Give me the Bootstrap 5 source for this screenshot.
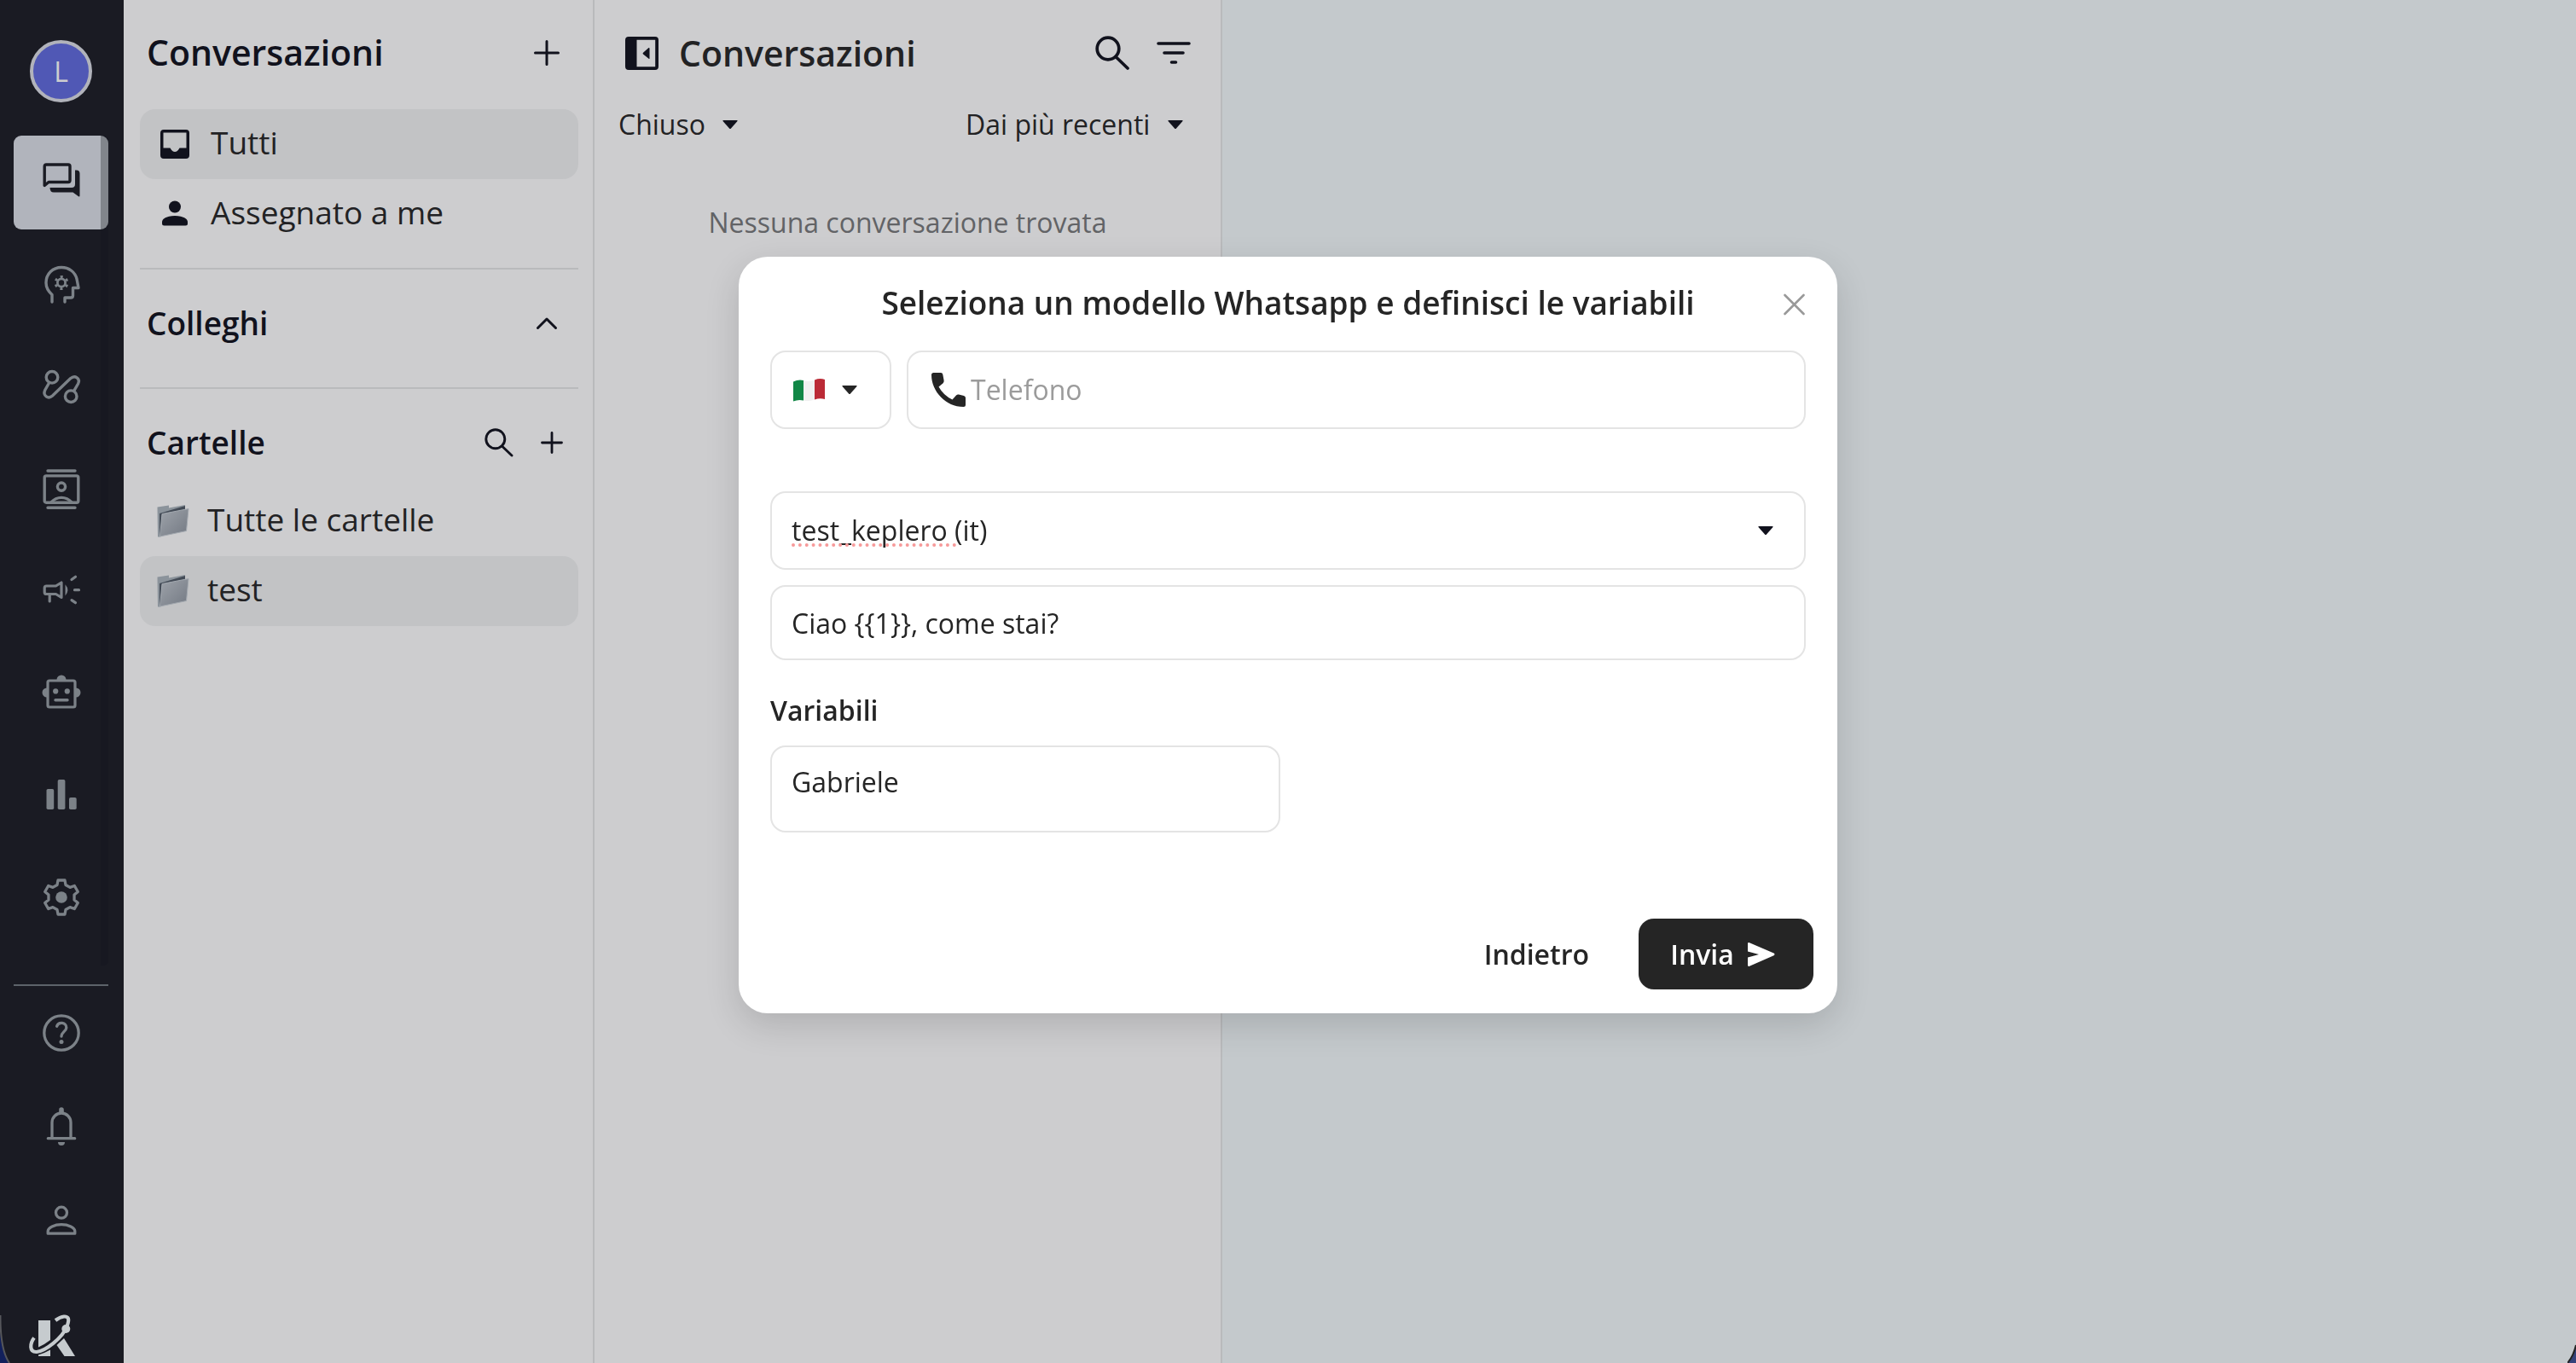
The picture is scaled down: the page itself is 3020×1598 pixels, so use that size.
<!DOCTYPE html>
<html lang="it">
<head>
<meta charset="utf-8">
<meta name="viewport" content="width=device-width, initial-scale=1">
<title>Conversazioni</title>
<link href="https://cdn.jsdelivr.net/npm/bootstrap@5.3.0/dist/css/bootstrap.min.css" rel="stylesheet">
<style>
  :root { --ink: #11121d; --text: #222224; --line: #b9babc; --panel: #cdcdcf; --rail: #1a1b23; --field: #e4e4e4; }
  body { font-family: "Open Sans", sans-serif; font-size: 32px; line-height: 48px; color: var(--text); background: #c4c9cc; }
  svg { display: block; flex: none; }
  .app-shell { height: 100vh; overflow: hidden; }
  /* icon rail */
  .rail { width: 145px; background: var(--rail); padding: 47px 18px 0 16px; }
  .avatar { width: 73px; height: 73px; border: 4px solid #b1b3bb; background: #5058b5; color: #cdcdcf; font-size: 32px; }
  .rail-scroll { margin-top: 39px; height: 973px; background: linear-gradient(to left, #171821 9px, transparent 9px); border-radius: 5px; gap: 10px; }
  .rail-link { height: 110px; color: #7c8288; border-radius: 9px; }
  .rail-scroll .rail-link { flex: none; }
  .rail-link.active { background: linear-gradient(to left, #81858b 9px, #b1b4bc 9px); color: var(--rail); }
  .rail-rule { margin-top: 22px; border-top: 2px solid #5d636a; }
  .rail-logo { margin: 54px 0 0 16px; }
  /* panels */
  .folders { width: 552px; background: var(--panel); border-right: 2px solid var(--line); padding: 0 17px 0 19px; }
  .threads { width: 736px; background: var(--panel); border-right: 2px solid var(--line); }
  .bar-top { height: 128px; padding-bottom: 4px; }
  h1, h2, h3 { margin: 0; color: var(--ink); font-weight: 600; }
  .title-lg { font-size: 41px; line-height: 56px; padding-bottom: 2px; }
  .title-md { font-size: 37px; line-height: 48px; }
  .threads h2 { color: var(--text); }
  .threads .bar-top { height: 122px; padding: 4px 35px 0 36px; }
  .threads .bar-top svg { margin-bottom: 2px; }
  .folders .head-row { padding: 0 22px 0 8px; color: var(--ink); }
  .folders .head-row.bar-top { padding-bottom: 4px; }
  .side-link { height: 82px; border-radius: 18px; font-size: 37px; color: var(--text); padding: 0 24px; gap: 25px; }
  .side-link.folder { padding: 0 20px; gap: 21px; }
  .side-link.active { background: #c2c3c5; }
  .side-link svg { color: var(--ink); }
  .side-link .side-text { padding-bottom: 4px; }
  .rule { border-top: 2px solid var(--line); }
  .rule-first { margin-top: 22px; }
  .folders .sec-colleagues { height: 138px; padding-bottom: 12px; }
  .folders .sec-folders { height: 114px; padding-top: 12px; padding-right: 18px; }
  .icon-btn { padding: 0; border: 0; background: none; color: inherit; }
  .pick { appearance: none; border: 0; color: var(--text); padding: 0 38px 0 0;
    background: url("data:image/svg+xml,%3Csvg xmlns='http://www.w3.org/2000/svg' width='18' height='10'%3E%3Cpath d='M1 0h16q1 0 .5 1L10 9.500q-1 1-2 0L.5 1Q0 0 1 0z' fill='%2311121d'/%3E%3C/svg%3E") no-repeat right center; }
  .filters { padding: 0 44px 0 28px; }
  .empty-note { margin-top: 67px; color: #626366; }
  /* template dialog */
  .dialog-wrap { display: block; padding-top: 301px; }
  .dialog-wrap .modal-dialog { max-width: 1288px; margin: 0 auto; }
  .dialog-wrap .modal-content { border: 0; border-radius: 34px; color: #252525; box-shadow: 0 14px 40px rgba(0, 0, 0, .14); }
  .dialog-head { height: 110px; padding: 0 39px 2px; }
  .dialog-head h3 { color: #252525; }
  .dialog-close { right: 38px; top: 43px; color: #999; }
  .dialog-body { padding: 0 37px; }
  .field { border: 2px solid var(--field); border-radius: 18px; background-color: #fff; color: #252525; padding: 0 23px; font-size: 32px; line-height: 48px; }
  .field-tall { height: 92px; }
  .field-msg { height: 88px; }
  .field-country { width: 142px; gap: 20px; padding-left: 25px; }
  .phone-box { gap: 6px; padding-left: 27px; }
  .phone-box input { border: 0; outline: 0; background: none; color: #252525; }
  .phone-box input::placeholder { color: #9b9b9b; opacity: 1; }
  .template-row { margin-top: 73px; margin-bottom: 18px; }
  select.field.pick { padding: 0 60px 0 23px; background-position: right 36px center; font-weight: 500; }
  .spell { left: 25px; top: 61px; width: 193px; border-bottom: 4px dotted #f79a9a; }
  .vars-label { margin: 35px 0 17px; font-weight: 600; }
  textarea.field { width: 598px; height: 102px; padding-top: 17px; resize: none; overflow: hidden; }
  .dialog-foot { padding: 101px 28px 28px; gap: 58px; font-weight: 600; }
  .btn-back { padding: 0; border: 0; background: none; font-weight: 600; color: #252525; }
  .btn-send { height: 83px; width: 205px; border: 0; border-radius: 18px; background: #252525; color: #fff; font-weight: 600; padding: 0 8px 0 0; gap: 16px; }
  .screen-corner { bottom: 0; z-index: 2000; }
</style>
<script src="https://cdn.jsdelivr.net/npm/bootstrap@5.3.0/dist/js/bootstrap.bundle.min.js"></script>
</head>
<body>
<div class="app-shell d-flex">

  <nav class="rail d-flex flex-column flex-shrink-0" aria-label="Principale">
    <a href="#" class="avatar rounded-circle d-flex align-items-center justify-content-center mx-auto text-decoration-none flex-shrink-0">L</a>
    <div class="rail-scroll d-flex flex-column flex-shrink-0">
      <a href="#" class="rail-link active d-flex align-items-center justify-content-center" aria-label="Conversazioni">
        <svg width="48" height="48" viewBox="0 0 48 48" fill="none" stroke="currentColor" stroke-width="3.4" stroke-linejoin="round"><path d="M4.200 27.500V5q0-2 2-2H32q2 0 2 2v16.500q0 2-2 2H9z"/><path d="M40 9.500h1.500q4 0 4 4V39.500q0 1.500-1.500.8L37.500 35.500H15q-4.500 0-4.500-5.500H36q4 0 4-4z" fill="currentColor" stroke="none"/></svg>
      </a>
      <a href="#" class="rail-link d-flex align-items-center justify-content-center" aria-label="Conoscenza">
        <svg width="48" height="48" viewBox="0 0 48 48" fill="none" stroke="currentColor" stroke-width="3.4" stroke-linecap="round" stroke-linejoin="round"><path d="M13 44V35.500C8.500 31.500 6 27 6 21.500C6 11 14 3.500 24 3.500C33 3.500 40 9 42 17L44 27.500H37.500V36.500q0 2.500-2.500 2.500H28V44"/><circle cx="24" cy="21.500" r="4.600" stroke-width="2.800"/><circle cx="24" cy="21.500" r="7" stroke-width="2.800" stroke-dasharray="3 4.330" stroke-linecap="butt" transform="rotate(17.700 24 21.500)"/></svg>
      </a>
      <a href="#" class="rail-link d-flex align-items-center justify-content-center" aria-label="Flussi">
        <svg width="48" height="48" viewBox="0 0 48 48" fill="none" stroke="currentColor" stroke-width="3.400"><circle cx="13" cy="12.300" r="6.800"/><circle cx="35.200" cy="34.700" r="6.800"/><path d="M9.800 18.500L4.700 27.500C2 34 8.500 38.500 13.500 34L34.500 13.800C40 9 46.500 14 43.500 20L38.500 28.600"/></svg>
      </a>
      <a href="#" class="rail-link d-flex align-items-center justify-content-center" aria-label="Contatti">
        <svg width="48" height="48" viewBox="0 0 48 48" fill="none" stroke="currentColor" stroke-width="3.400" stroke-linecap="round"><path d="M8 2h32M8 45.300h32"/><rect x="4.200" y="7.900" width="39.600" height="31.300" rx="2"/><circle cx="24" cy="20.600" r="4.600"/><path d="M12 39q5-5.600 12-5.600T36 39"/></svg>
      </a>
      <a href="#" class="rail-link d-flex align-items-center justify-content-center" aria-label="Campagne">
        <svg width="48" height="48" viewBox="0 0 48 48" fill="none" stroke="currentColor" stroke-width="3.200" stroke-linecap="round" stroke-linejoin="round"><path d="M17.500 17L24 13V30.500L17.500 26.500H6.500q-2.300 0-2.300-2.300v-4.900q0-2.300 2.300-2.300zM10.200 27v8M36 9.500l4.500-3.200M39.500 21.700H44.500M36 33.700l4.500 3"/><path d="M28.500 15.200q5.800 6.500 0 13.200z" fill="currentColor" stroke="none"/></svg>
      </a>
      <a href="#" class="rail-link d-flex align-items-center justify-content-center" aria-label="Assistenti">
        <svg width="50" height="48" viewBox="-1 0 50 48" fill="currentColor"><path d="M18.500 7a5.500 5.500 0 0 1 11 0zM7 16.500a5.500 5.500 0 0 0 0 11zM41 16.500a5.500 5.500 0 0 1 0 11z"/><rect x="8" y="8" width="32" height="31" rx="2" fill="none" stroke="currentColor" stroke-width="3.200"/><circle cx="17.200" cy="20.400" r="3.100"/><circle cx="30.800" cy="20.400" r="3.100"/><path d="M17 30.700h14" stroke="currentColor" stroke-width="3.400" stroke-linecap="round"/></svg>
      </a>
      <a href="#" class="rail-link d-flex align-items-center justify-content-center" aria-label="Statistiche">
        <svg width="48" height="48" viewBox="0 0 48 48" fill="currentColor"><rect x="6.500" y="15" width="8.700" height="24" rx="1.800"/><rect x="19.700" y="4" width="8.700" height="35" rx="1.800"/><rect x="33" y="25" width="8.700" height="14" rx="1.800"/></svg>
      </a>
      <a href="#" class="rail-link d-flex align-items-center justify-content-center" aria-label="Impostazioni">
        <svg width="48" height="48" viewBox="-24 -22 48 48" fill="none" stroke="currentColor" stroke-width="3.300" stroke-linejoin="round"><path d="M-4-20H4L5-14.500L10.060-11.580L15.320-13.460L19.320-6.540L15.060-2.920V2.920L19.320 6.540L15.320 13.460L10.060 11.580L5 14.500L4 20H-4L-5 14.500L-10.060 11.580L-15.320 13.460L-19.320 6.540L-15.060 2.920V-2.920L-19.320-6.540L-15.320-13.460L-10.060-11.580L-5-14.500z"/><circle r="6.800" fill="currentColor" stroke="none"/></svg>
      </a>
    </div>
    <div class="rail-rule"></div>
    <a href="#" class="rail-link d-flex align-items-center justify-content-center flex-shrink-0" aria-label="Aiuto">
      <svg width="48" height="48" viewBox="0 0 48 48" fill="none" stroke="currentColor" stroke-width="3.300" stroke-linecap="round"><circle cx="24" cy="24" r="20.200"/><path d="M18.600 16.200C20.500 10.500 30 11.200 29.800 18C29.600 22 24 23 24 28"/><circle cx="24" cy="34.500" r="2.500" fill="currentColor" stroke="none"/></svg>
    </a>
    <a href="#" class="rail-link d-flex align-items-center justify-content-center flex-shrink-0" aria-label="Notifiche">
      <svg width="48" height="48" viewBox="0 0 48 48" fill="none" stroke="currentColor" stroke-width="3.300" stroke-linecap="round"><path d="M13 37V19a11 11 0 0 1 22 0V37M8.300 37.700h31.400"/><path d="M21.200 7V4q0-2.700 2.800-2.700T26.800 4v3zM20 42h8q0 4-4 4t-4-4z" fill="currentColor" stroke="none"/></svg>
    </a>
    <a href="#" class="rail-link d-flex align-items-center justify-content-center flex-shrink-0" aria-label="Profilo">
      <svg width="48" height="48" viewBox="0 0 48 48" fill="none" stroke="currentColor" stroke-width="3.300" stroke-linejoin="round"><circle cx="24" cy="14.700" r="6.500"/><path d="M8.200 39.200v-2.700C8.200 32 16 28.700 24 28.700S39.800 32 39.800 36.500v2.700z"/></svg>
    </a>
    <svg class="rail-logo" width="60" height="54" viewBox="0 0 60 54"><path d="M13 8h14v23Q20 36.500 13 39.500zM13 48.500Q20 46.500 27 42.500V50H13zM34.500 37L43 29L56 50H43.500z" fill="#c6cbce"/><path d="M8 28.500C3 35 2 45.500 11 45C21 44 41 29 46.500 15C50 6 48 3.300 43 3.500C40 3.800 37 5 33 8" fill="none" stroke="#c6cbce" stroke-width="4.200"/><circle cx="45.300" cy="18" r="5" fill="#c6cbce"/></svg>
  </nav>

  <aside class="folders flex-shrink-0">
    <div class="head-row bar-top d-flex align-items-center justify-content-between">
      <h1 class="title-lg">Conversazioni</h1>
      <button type="button" class="icon-btn" aria-label="Nuova conversazione"><svg width="30" height="32" viewBox="0 0 30 32" stroke="currentColor" stroke-width="3" stroke-linecap="round"><path d="M15 2.500v27M1.500 16h27"/></svg></button>
    </div>
    <a href="#" class="side-link active d-flex align-items-center text-decoration-none">
      <svg width="34" height="34" viewBox="0 0 34 34" fill="currentColor"><path fill-rule="evenodd" d="M4 0h26q4 0 4 4v26q0 4-4 4H4q-4 0-4-4V4q0-4 4-4zM3.500 3.500V21.500H11.500Q14 26 17 26T22.500 21.500H30.500V3.500z"/></svg>
      <span class="side-text">Tutti</span>
    </a>
    <a href="#" class="side-link d-flex align-items-center text-decoration-none">
      <svg width="34" height="34" viewBox="0 0 34 34" fill="currentColor"><circle cx="17" cy="8.500" r="7"/><path d="M2 26.500C2 21.500 9.500 19 17 19S32 21.500 32 26.500V28q0 2.500-2.500 2.500h-25Q2 30.500 2 28z"/></svg>
      <span class="side-text">Assegnato a me</span>
    </a>
    <div class="rule rule-first"></div>
    <div class="head-row sec-colleagues d-flex align-items-center justify-content-between">
      <h2 class="title-md">Colleghi</h2>
      <button type="button" class="icon-btn" aria-label="Comprimi"><svg width="30" height="16" viewBox="0 0 30 16" fill="none" stroke="currentColor" stroke-width="3" stroke-linecap="round" stroke-linejoin="round"><path d="M4.500 13.500L15 3l10.500 10.500"/></svg></button>
    </div>
    <div class="rule"></div>
    <div class="head-row sec-folders d-flex align-items-center justify-content-between">
      <h2 class="title-md">Cartelle</h2>
      <div class="d-flex align-items-center gap-4">
        <button type="button" class="icon-btn me-2" aria-label="Cerca cartella"><svg width="34" height="34" viewBox="0 0 34 34" fill="none" stroke="currentColor" stroke-width="2.900" stroke-linecap="round"><circle cx="12.800" cy="12.800" r="11"/><path d="M20.500 21l11.500 11"/></svg></button>
        <button type="button" class="icon-btn" aria-label="Nuova cartella"><svg width="26" height="26" viewBox="0 0 26 26" stroke="currentColor" stroke-width="2.800" stroke-linecap="round"><path d="M13 1.500v23M1.500 13h23"/></svg></button>
      </div>
    </div>
    <a href="#" class="side-link folder d-flex align-items-center text-decoration-none">
      <svg width="38" height="38" viewBox="0 0 38 38"><defs><linearGradient id="fold" x1="0" y1="0" x2="1" y2="1"><stop offset="0" stop-color="#9ea3aa"/><stop offset="1" stop-color="#737983"/></linearGradient></defs><path d="M.5 2.500L14 .5V3.500L33 0v14L4 37.500H1z" fill="#8b939b"/><path d="M3 10L33 1v7L6 36l-3 1z" fill="#434b56"/><path d="M6 10.500L37 4.500L34.500 30.500L3.500 37z" fill="url(#fold)" stroke="#a3a9b0"/></svg>
      <span class="side-text">Tutte le cartelle</span>
    </a>
    <a href="#" class="side-link folder active d-flex align-items-center text-decoration-none">
      <svg width="38" height="38" viewBox="0 0 38 38"><path d="M.5 2.500L14 .5V3.500L33 0v14L4 37.500H1z" fill="#8b939b"/><path d="M3 10L33 1v7L6 36l-3 1z" fill="#434b56"/><path d="M6 10.500L37 4.500L34.500 30.500L3.500 37z" fill="url(#fold)" stroke="#a3a9b0"/></svg>
      <span class="side-text">test</span>
    </a>
  </aside>

  <section class="threads flex-shrink-0">
    <div class="bar-top d-flex align-items-center">
      <button type="button" class="icon-btn" aria-label="Chiudi pannello"><svg width="39" height="39" viewBox="0 0 39 39" fill="#11121d"><path fill-rule="evenodd" d="M4 0h31q4 0 4 4v31q0 4-4 4H4q-4 0-4-4V4q0-4 4-4zM13.500 3.800v31.500H35.200V3.800zM28.500 14v11.500q0 1-1 .3L21 20.500q-.8-.9 0-1.800L27.500 13q1-.5 1 1z"/></svg></button>
      <h2 class="title-lg flex-grow-1 ps-4">Conversazioni</h2>
      <button type="button" class="icon-btn" aria-label="Cerca"><svg width="40" height="40" viewBox="0 0 40 40" fill="none" stroke="#11121d" stroke-width="3.700" stroke-linecap="round"><circle cx="15" cy="15" r="12.800"/><path d="M24.500 25L38 38"/></svg></button>
      <button type="button" class="icon-btn ms-4 ps-2" aria-label="Filtra"><svg width="40" height="28" viewBox="0 0 40 28" stroke="#11121d" stroke-width="3.600" stroke-linecap="round"><path d="M2 3h36M9 14h22M17.500 25h5"/></svg></button>
    </div>
    <div class="filters d-flex justify-content-between">
      <select class="pick" aria-label="Stato"><option>Chiuso</option></select>
      <select class="pick" aria-label="Ordinamento"><option>Dai più recenti</option></select>
    </div>
    <p class="empty-note text-center mb-0">Nessuna conversazione trovata</p>
  </section>

  <main class="flex-grow-1"></main>
</div>

<div class="modal dialog-wrap" tabindex="-1" role="dialog" aria-labelledby="dlg-title">
  <div class="modal-dialog">
    <form class="modal-content">
      <div class="dialog-head position-relative d-flex align-items-center justify-content-center">
        <h3 class="title-md" id="dlg-title">Seleziona un modello Whatsapp e definisci le variabili</h3>
        <button type="button" class="icon-btn dialog-close position-absolute" aria-label="Chiudi"><svg width="25" height="26" viewBox="0 0 25 26" stroke="currentColor" stroke-width="2.600" stroke-linecap="round"><path d="M1.500 2l22 22M23.500 2l-22 22"/></svg></button>
      </div>
      <div class="dialog-body">
        <div class="d-flex" style="gap:18px">
          <button type="button" class="field field-tall field-country d-flex align-items-center" aria-label="Prefisso Italia">
            <svg width="37" height="27" viewBox="0 0 37 27"><path d="M0 3.500Q6 .5 12 2V25.500Q6 24 0 26.500z" fill="#118746"/><path d="M12 2Q18 4 25 1.500V24.500Q18 27 12 25.500z" fill="#f1f1f1"/><path d="M25 1.500Q31-1 37 1V24Q31 22.500 25 24.500z" fill="#bb2a36"/></svg>
            <svg width="18" height="10" viewBox="0 0 18 10"><path d="M1 0h16q1 0 .5 1L10 9.500q-1 1-2 0L.5 1Q0 0 1 0z" fill="#252525"/></svg>
          </button>
          <label class="field field-tall phone-box d-flex align-items-center flex-grow-1">
            <svg width="40" height="40" viewBox="0 0 40 40" fill="#252525"><path d="M2.500 0H11q2 0 2.300 2L14.600 9q.3 2-1 3.200L8.500 16.500Q14 26.500 24.500 31.500L29 26.500q1.200-1.200 3-.9L38 27q2 .5 2 2.500V37.500q0 2.500-2.500 2.500C17 40 0 22 0 2.500Q0 0 2.500 0z"/></svg>
            <input type="tel" class="flex-grow-1 p-0" placeholder="Telefono" aria-label="Telefono">
          </label>
        </div>
        <div class="template-row position-relative">
          <select class="field field-tall pick w-100" aria-label="Modello"><option>test_keplero (it)</option></select>
          <span class="spell position-absolute" aria-hidden="true"></span>
        </div>
        <input type="text" class="field field-msg w-100 d-block" value="Ciao {{1}}, come stai?" aria-label="Messaggio" readonly>
        <label class="vars-label d-block" for="var1">Variabili</label>
        <textarea class="field d-block" id="var1" rows="1">Gabriele</textarea>
      </div>
      <div class="dialog-foot d-flex justify-content-end align-items-center">
        <button type="button" class="btn-back">Indietro</button>
        <button type="submit" class="btn-send d-flex align-items-center justify-content-center">Invia
          <svg width="32" height="28" viewBox="0 0 32 28" fill="#fff"><path d="M0 1.500Q0-.5 2 .3L30.500 12.600q2 1.200 0 2.600L2 27.700Q0 28.400 0 26.500V17.500L13 14L0 10.500z"/></svg>
        </button>
      </div>
    </form>
  </div>
</div>

<svg class="screen-corner position-fixed start-0" width="12" height="56" viewBox="0 0 12 56" aria-hidden="true"><path d="M0 20Q2 44 11 56H0z" fill="#12205c"/><path d="M.5 0Q0 40 11 56" fill="none" stroke="#55565b" stroke-width="2"/></svg>
<svg class="screen-corner position-fixed end-0" width="10" height="22" viewBox="0 0 10 22" aria-hidden="true"><path d="M10 2Q7 14 0 22H10z" fill="#35427a"/><path d="M10 1Q7 14 0 22" fill="none" stroke="#222" stroke-width="2"/></svg>
</body>
</html>
